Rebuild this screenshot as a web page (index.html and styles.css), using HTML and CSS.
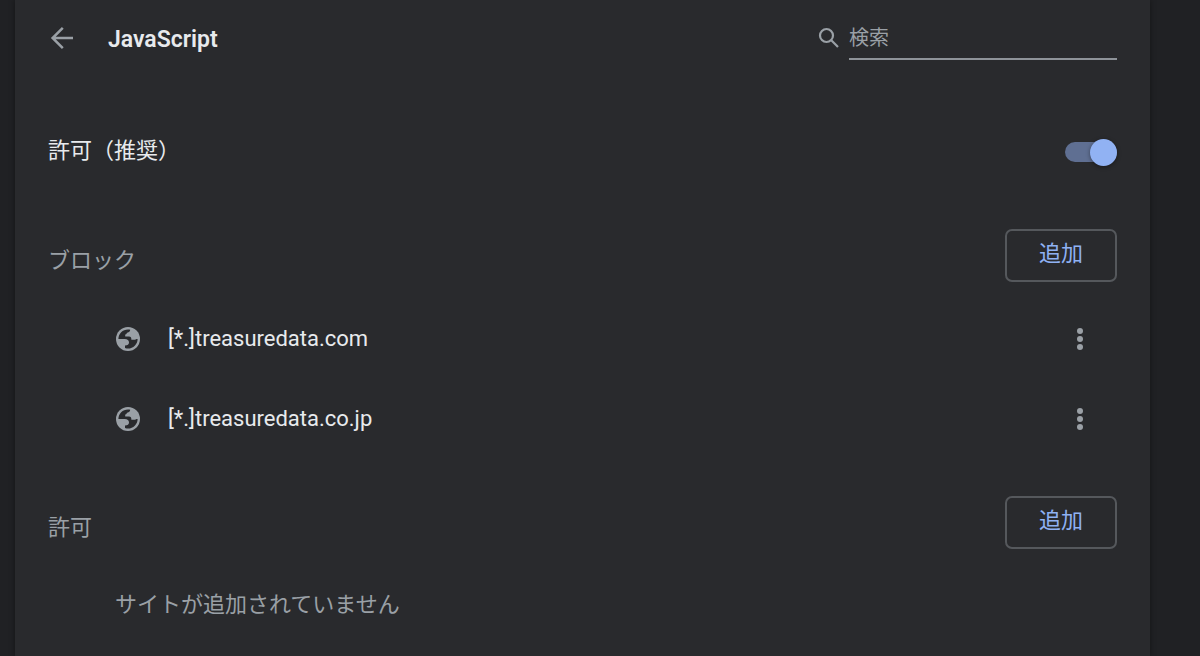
FILE: index.html
```html
<!DOCTYPE html>
<html lang="ja">
<head>
<meta charset="utf-8">
<meta name="viewport" content="width=device-width, initial-scale=1">
<title>JavaScript</title>
<link rel="stylesheet" href="styles.css">
</head>
<body>
<svg class="defs" width="0" height="0" aria-hidden="true">
  <symbol id="globe" viewBox="0 0 24 24">
    <circle cx="12" cy="12" r="12" fill="#9aa0a6"/>
    <path fill="#292a2d" d="M2.4 12C2.4 6.600 6.700 2.400 12 2.400C12.800 2.400 13.500 2.500 14.200 2.700C14 4.600 12.900 5.200 11.600 5.400C10.600 5.600 10.800 7.400 9.200 7.600V9.600H13C14.800 9.600 15.400 10.600 15.400 12.800H18C19.400 12.800 19.800 12 21.600 12C21.600 17.300 17.300 21.600 12 21.600C11 21.600 10 21.500 9 21.100V18.400C11.600 18.400 13 17.600 13 15.600C13 13.200 11.400 12 8.800 12Z"/>
  </symbol>
  <symbol id="more" viewBox="0 0 6 24">
    <circle cx="3" cy="4" r="3"/><circle cx="3" cy="12" r="3"/><circle cx="3" cy="20" r="3"/>
  </symbol>
</svg>
<main class="card">
  <header class="header">
    <button class="icon-button" type="button" aria-label="戻る">
      <svg width="24" height="24" viewBox="0 0 24 24" fill="none" stroke="currentColor" stroke-width="2.500"><path d="M23 12H3M12.800 1.800L2.600 12L12.800 22.200"/></svg>
    </button>
    <h1 class="title">JavaScript</h1>
    <label class="search">
      <svg class="search-icon" width="22" height="22" viewBox="0 0 22 22" fill="none" stroke="currentColor" stroke-width="2.200"><circle cx="8.500" cy="8.500" r="6.500"/><path d="M13.300 13.300L20 20"/></svg>
      <input class="search-input" type="search" placeholder="検索" aria-label="検索">
    </label>
  </header>

  <label class="toggle-row">
    <span>許可（推奨）</span>
    <input class="toggle" type="checkbox" role="switch" checked>
  </label>

  <section class="section">
    <div class="section-header">
      <h2 class="section-title">ブロック</h2>
      <button class="add-button" type="button">追加</button>
    </div>
    <ul class="sites">
      <li class="site">
        <svg class="globe" width="24" height="24"><use href="#globe"/></svg>
        <span class="site-name">[*.]treasuredata.com</span>
        <button class="icon-button more" type="button" aria-label="その他の操作"><svg width="6" height="24" fill="currentColor"><use href="#more"/></svg></button>
      </li>
      <li class="site">
        <svg class="globe" width="24" height="24"><use href="#globe"/></svg>
        <span class="site-name">[*.]treasuredata.co.jp</span>
        <button class="icon-button more" type="button" aria-label="その他の操作"><svg width="6" height="24" fill="currentColor"><use href="#more"/></svg></button>
      </li>
    </ul>
  </section>

  <section class="section">
    <div class="section-header">
      <h2 class="section-title">許可</h2>
      <button class="add-button" type="button">追加</button>
    </div>
    <p class="empty">サイトが追加されていません</p>
  </section>
</main>
</body>
</html>
```

FILE: styles.css
```css
* {
  box-sizing: border-box;
}

body {
  margin: 0;
  padding: 0 50px 0 15px;
  background: #202124;
  color: #e8eaed;
  font: 22px/32px Roboto, "Noto Sans CJK JP", sans-serif;
}

.defs {
  display: block;
}

.card {
  min-height: 100vh;
  padding: 0 33px;
  background: #292a2d;
  box-shadow: 0 0 6px rgba(0, 0, 0, 0.4);
}

.header {
  display: flex;
  align-items: center;
  height: 76px;
}

.icon-button {
  display: grid;
  place-items: center;
  width: 28px;
  height: 40px;
  padding: 0;
  border: 0;
  background: none;
  color: #9aa0a6;
}

.title {
  flex: 1;
  margin: 0 0 0 32px;
  padding-top: 3px;
  font-size: 23px;
  font-weight: 600;
}

.search {
  display: flex;
  align-items: center;
  gap: 9px;
  color: #9aa0a6;
}

.search-input {
  width: 268px;
  height: 44px;
  padding: 1px 0 0;
  border: 0;
  border-bottom: 2px solid #8e9399;
  border-radius: 0;
  outline: 0;
  background: none;
  color: #e8eaed;
  font: inherit;
  font-size: 20px;
}

.search-input::placeholder {
  color: #9aa0a6;
}

.toggle-row {
  display: flex;
  align-items: center;
  justify-content: space-between;
  height: 150px;
}

.toggle {
  appearance: none;
  display: flex;
  align-items: center;
  justify-content: flex-end;
  width: 52px;
  height: 20px;
  margin: 2px 0 0;
  border-radius: 10px;
  background: #5f6f92;
}

.toggle::before {
  content: "";
  width: 27px;
  height: 27px;
  flex: none;
  border-radius: 50%;
  background: #91b2f3;
  box-shadow: 0 1px 4px rgba(0, 0, 0, 0.4);
}

.toggle:not(:checked) {
  justify-content: flex-start;
}

.section + .section {
  margin-top: 34px;
}

.section-header {
  display: flex;
  align-items: center;
  justify-content: space-between;
  height: 59px;
  margin-bottom: 14px;
}

.section-title {
  margin: 0;
  padding-top: 10px;
  color: #9aa0a6;
  font-size: 22px;
  font-weight: 400;
}

.add-button {
  width: 112px;
  height: 53px;
  padding: 0 0 3px;
  border: 2px solid #55585c;
  border-radius: 7px;
  background: none;
  color: #8fb1f3;
  font: inherit;
}

.sites {
  margin: 0;
  padding: 0;
  list-style: none;
}

.site {
  display: flex;
  align-items: center;
  height: 80px;
  padding: 0 23px 0 68px;
}

.site-name {
  flex: 1;
  margin-left: 28px;
}

.empty {
  margin: 0;
  padding: 23px 0 24px 67px;
  color: #9aa0a6;
}
```
